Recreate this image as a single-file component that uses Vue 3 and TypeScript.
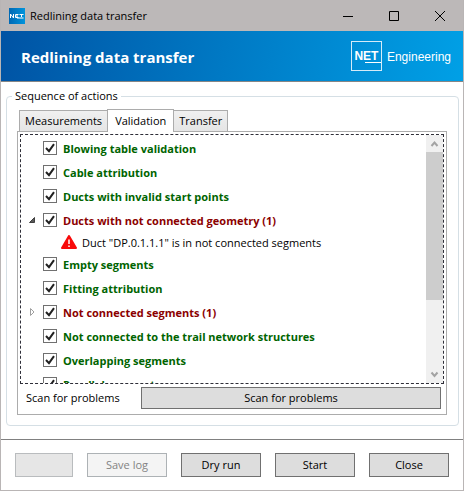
<script setup lang="ts">
import { reactive, ref } from 'vue'

interface Check {
  id: string
  label: string
  enabled: boolean
  expanded: boolean
  problems: string[]
}

const tabs = ['Measurements', 'Validation', 'Transfer']
const activeTab = ref('Validation')

function check(id: string, label: string, problems: string[] = [], expanded = false): Check {
  return { id, label, enabled: true, expanded, problems }
}

const checks = reactive<Check[]>([
  check('blowing', 'Blowing table validation'),
  check('cable', 'Cable attribution'),
  check('start-points', 'Ducts with invalid start points'),
  check('geometry', 'Ducts with not connected geometry', ['Duct "DP.0.1.1.1" is in not connected segments'], true),
  check('empty', 'Empty segments'),
  check('fitting', 'Fitting attribution'),
  check('segments', 'Not connected segments', ['Segment is not connected']),
  check('trail', 'Not connected to the trail network structures'),
  check('overlapping', 'Overlapping segments'),
  check('parallel', 'Parallel segments'),
])

function caption(item: Check): string {
  return item.problems.length ? `${item.label} (${item.problems.length})` : item.label
}
</script>

<template>
  <div class="window">
    <header class="titlebar">
      <svg class="app-icon" viewBox="0 0 16 16" aria-hidden="true">
        <defs>
          <linearGradient id="icon-fill" x1="0" y1="0" x2="1" y2="0">
            <stop offset="0" stop-color="#0068b4" />
            <stop offset="1" stop-color="#0094dc" />
          </linearGradient>
        </defs>
        <rect width="16" height="16" fill="url(#icon-fill)" />
        <path d="M1.500 10V6l3 4V6M9.500 6.500H6.500v3h3M6.500 8h2.500M10.500 6.500h4M12.500 6.500V9M8 10h6.500" fill="none" stroke="#fff" />
      </svg>
      <span class="title">Redlining data transfer</span>
      <button class="caption-button" type="button" aria-label="Minimize">
        <svg viewBox="0 0 12 12"><path d="M1 6.500h10" /></svg>
      </button>
      <button class="caption-button" type="button" aria-label="Maximize">
        <svg viewBox="0 0 12 12"><path d="M1.500 1.500h9v9h-9z" /></svg>
      </button>
      <button class="caption-button" type="button" aria-label="Close window">
        <svg viewBox="0 0 12 12"><path d="M1 1l10 10M11 1L1 11" /></svg>
      </button>
    </header>

    <div class="banner">
      <h1>Redlining data transfer</h1>
      <div class="brand">
        <span class="brand-box">NET</span>
        <span class="brand-name">Engineering</span>
      </div>
    </div>

    <main class="content">
      <fieldset class="group">
        <legend>Sequence of actions</legend>
        <div class="tabs" role="tablist">
          <button
            v-for="tab in tabs"
            :key="tab"
            type="button"
            role="tab"
            class="tab"
            :class="{ active: tab === activeTab }"
            :aria-selected="tab === activeTab"
            @click="activeTab = tab"
          >{{ tab }}</button>
        </div>
        <div class="panel" role="tabpanel">
          <div class="list">
            <ul class="tree">
              <li v-for="item in checks" :key="item.id">
                <div class="row">
                  <button
                    v-if="item.problems.length"
                    class="expander"
                    type="button"
                    :aria-label="item.expanded ? 'Collapse' : 'Expand'"
                    @click="item.expanded = !item.expanded"
                  >
                    <svg viewBox="0 0 8 10">
                      <path v-if="item.expanded" d="M6.500 2.500V7.500H1.500z" fill="#595959" stroke="#404040" />
                      <path v-else d="M2.500 1.500v7L6 5z" fill="#fff" stroke="#a0a0a0" />
                    </svg>
                  </button>
                  <span v-else class="expander"></span>
                  <span class="checkbox">
                    <input :id="item.id" v-model="item.enabled" type="checkbox" />
                    <svg v-if="item.enabled" viewBox="0 0 14 14"><path d="M3 7l3 3.200 5-7" /></svg>
                  </span>
                  <label :for="item.id" :class="item.problems.length ? 'failed' : 'passed'">{{ caption(item) }}</label>
                </div>
                <template v-if="item.expanded">
                  <div v-for="problem in item.problems" :key="problem" class="problem">
                    <svg viewBox="0 0 16 14" aria-hidden="true">
                      <path d="M8 1l7 12H1z" fill="#f80a0a" stroke="#f80a0a" stroke-width="2" stroke-linejoin="round" />
                      <path d="M8 4.500v4.500M8 10.500v1.500" stroke="#fff" stroke-width="1.500" />
                    </svg>
                    <span>{{ problem }}</span>
                  </div>
                </template>
              </li>
            </ul>
            <div class="scrollbar" aria-hidden="true">
              <svg viewBox="0 0 17 17"><path d="M5.500 11L8.500 7.500l3 3.500" /></svg>
              <div class="track"><div class="thumb"></div></div>
              <svg viewBox="0 0 17 17"><path d="M5.500 6.500L8.500 10l3-3.500" /></svg>
            </div>
          </div>
          <div class="scan">
            <span>Scan for problems</span>
            <button class="button" type="button">Scan for problems</button>
          </div>
        </div>
      </fieldset>
    </main>

    <footer class="footer">
      <button class="button blank" type="button" disabled aria-label="Progress"></button>
      <button class="button muted" type="button" disabled>Save log</button>
      <button class="button" type="button">Dry run</button>
      <button class="button" type="button">Start</button>
      <button class="button" type="button">Close</button>
    </footer>
  </div>
</template>

<style>
body {
  margin: 0;
}
</style>

<style scoped>
.window {
  box-sizing: border-box;
  height: 100vh;
  display: flex;
  flex-direction: column;
  border: 1px solid #b9b5b5;
  border-top: 0;
  background: #fff;
  color: #000;
  font-family: "Open Sans", "Noto Sans", sans-serif;
  font-size: 11px;
  line-height: 16px;
}

button {
  font: inherit;
  color: inherit;
}

.titlebar {
  display: flex;
  align-items: center;
  height: 31px;
  padding-left: 8px;
  background: #bcb8b8;
}

.app-icon {
  width: 16px;
  height: 16px;
  margin-right: 5px;
}

.title {
  flex: 1;
}

.caption-button {
  display: grid;
  place-items: center;
  width: 46px;
  height: 31px;
  padding: 0;
  border: 0;
  background: none;
}

.caption-button svg {
  width: 12px;
  height: 12px;
  fill: none;
  stroke: #000;
}

.banner {
  display: flex;
  align-items: center;
  justify-content: space-between;
  height: 50px;
  padding: 0 12px 0 20px;
  border-bottom: 1px solid #868686;
  background: linear-gradient(100deg, #0053a4, #0079c4 48%, #00a0e6);
  color: #fff;
}

h1 {
  margin: 0;
  padding-top: 2px;
  font-size: 15px;
  line-height: 24px;
  font-weight: 700;
}

.brand {
  display: flex;
  align-items: center;
  gap: 5px;
}

.brand-box {
  position: relative;
  box-sizing: border-box;
  width: 31px;
  height: 30px;
  border: 1px solid #d5ebf8;
  font: 700 12px/29px "Liberation Sans", sans-serif;
  text-align: center;
}

.brand-box::after {
  content: "";
  position: absolute;
  right: 0;
  bottom: 7px;
  width: 16px;
  height: 1px;
  background: #fff;
}

.brand-name {
  padding-top: 2px;
  font: 12px/16px "Liberation Sans", sans-serif;
}

.content {
  flex: 1;
  min-height: 0;
  display: flex;
  padding: 6px 4px 13px 5px;
}

.group {
  flex: 1;
  min-width: 0;
  display: flex;
  flex-direction: column;
  margin: 0;
  padding: 4px 11px 10px 10px;
  border: 1px solid #d5dfe5;
  border-radius: 4px;
}

legend {
  margin-left: -5px;
  padding: 0 3px;
}

.tabs {
  display: flex;
  align-items: flex-end;
  height: 23px;
  padding-left: 2px;
}

.tab {
  height: 21px;
  margin-left: -1px;
  padding: 0 5px;
  border: 1px solid #acacac;
  border-bottom: 0;
  background: linear-gradient(#f0f0f0, #e5e5e5);
  white-space: nowrap;
}

.tab:first-child {
  margin-left: 0;
}

.tab.active {
  z-index: 1;
  height: 23px;
  margin-bottom: -1px;
  padding: 0 7px;
  background: #fff;
}

.panel {
  flex: 1;
  min-height: 0;
  display: flex;
  flex-direction: column;
  padding: 2px;
  border: 1px solid #acacac;
}

.list {
  flex: 1;
  min-height: 0;
  display: flex;
  border: 1px dashed #2e2e38;
}

.tree {
  flex: 1;
  min-width: 0;
  margin: 0;
  padding: 1px 0 0 5px;
  overflow: hidden;
  list-style: none;
}

.row {
  display: flex;
  align-items: center;
  height: 24px;
  font-weight: 700;
  white-space: nowrap;
}

.row label {
  padding-top: 2px;
}

.expander {
  width: 17px;
  height: 16px;
  padding: 3px 0 3px 2px;
  box-sizing: border-box;
  border: 0;
  background: none;
  display: flex;
}

.expander svg {
  width: 8px;
  height: 10px;
}

.checkbox {
  display: grid;
  margin-right: 6px;
}

.checkbox input,
.checkbox svg {
  grid-area: 1 / 1;
  width: 14px;
  height: 14px;
}

.checkbox input {
  appearance: none;
  box-sizing: border-box;
  margin: 0;
  border: 1px solid #707070;
  background: #fff;
}

.checkbox svg {
  fill: none;
  stroke: #212121;
  stroke-width: 2;
  pointer-events: none;
}

.passed {
  color: #006400;
}

.failed {
  color: #8b0000;
}

.problem {
  display: flex;
  align-items: center;
  gap: 5px;
  height: 20px;
  padding-left: 35px;
  white-space: nowrap;
}

.problem span {
  padding-top: 2px;
}

.problem svg {
  width: 16px;
  height: 14px;
}

.scrollbar {
  display: flex;
  flex-direction: column;
  width: 17px;
  background: #f0f0f0;
}

.scrollbar svg {
  width: 17px;
  height: 17px;
  fill: none;
  stroke: #a3a3a3;
  stroke-width: 2;
}

.track {
  flex: 1;
}

.thumb {
  height: 69%;
  background: #cdcdcd;
}

.scan {
  display: grid;
  grid-template-columns: 115px 1fr;
  align-items: center;
  padding: 3px 3px 3px 6px;
}

.button {
  box-sizing: border-box;
  height: 24px;
  padding: 0;
  border: 1px solid #707070;
  background: #ddd;
}

.scan .button {
  height: 22px;
}

.footer {
  display: grid;
  grid-template-columns: 58fr repeat(4, 80fr);
  gap: 14px;
  padding: 13px 14px;
  border-top: 1px solid #808080;
}

.blank {
  border-color: #b9bcbe;
  background: #e6e6e6;
}

.muted {
  border-color: #adb2b5;
  background: #f4f4f4;
  color: #838383;
}
</style>
